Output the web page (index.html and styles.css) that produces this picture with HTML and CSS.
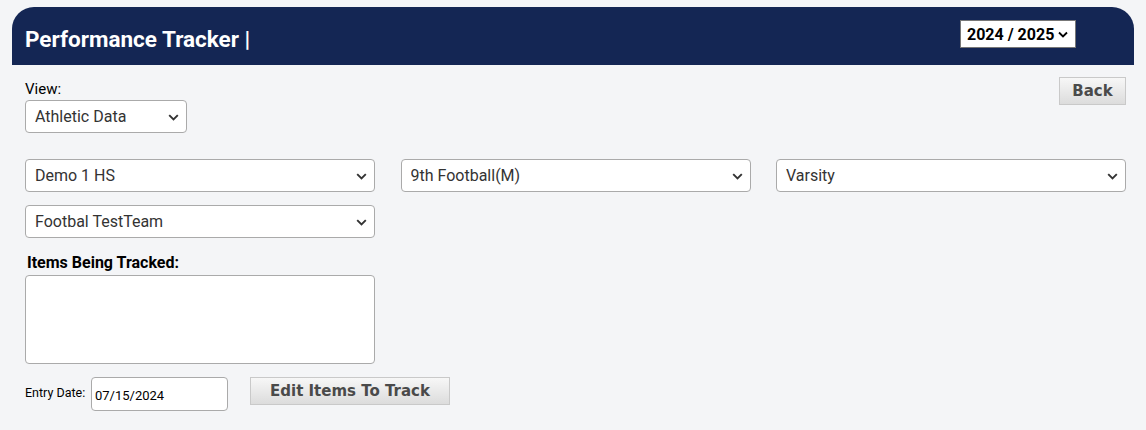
FILE: index.html
```html
<!DOCTYPE html>
<html>
<head>
<meta charset="utf-8">
<link rel="stylesheet" href="styles.css">
</head>
<body>
<header class="topbar">
  <h1 class="title">Performance Tracker |</h1>
  <div class="year-wrap">
    <select class="year-select"><option>2024 / 2025</option></select>
    <svg class="year-chev" width="10" height="7" viewBox="0 0 10 7"><path d="M1 1.5 L5 5.5 L9 1.5" fill="none" stroke="#000" stroke-width="1.8"/></svg>
  </div>
</header>
<main class="content">
  <div class="top-row">
    <div class="view-group">
      <label class="view-label">View:</label>
      <div class="sel sel-view">
        <select><option>Athletic Data</option></select>
        <svg class="chev" width="11" height="7" viewBox="0 0 11 7"><path d="M1.2 1.2 L5.5 5.5 L9.8 1.2" fill="none" stroke="#333" stroke-width="1.9"/></svg>
      </div>
    </div>
    <button class="btn btn-back">Back</button>
  </div>
  <div class="grid">
    <div class="sel">
      <select><option>Demo 1 HS</option></select>
      <svg class="chev" width="11" height="7" viewBox="0 0 11 7"><path d="M1.2 1.2 L5.5 5.5 L9.8 1.2" fill="none" stroke="#333" stroke-width="1.9"/></svg>
    </div>
    <div class="sel">
      <select><option>9th Football(M)</option></select>
      <svg class="chev" width="11" height="7" viewBox="0 0 11 7"><path d="M1.2 1.2 L5.5 5.5 L9.8 1.2" fill="none" stroke="#333" stroke-width="1.9"/></svg>
    </div>
    <div class="sel">
      <select><option>Varsity</option></select>
      <svg class="chev" width="11" height="7" viewBox="0 0 11 7"><path d="M1.2 1.2 L5.5 5.5 L9.8 1.2" fill="none" stroke="#333" stroke-width="1.9"/></svg>
    </div>
    <div class="sel">
      <select><option>Footbal TestTeam</option></select>
      <svg class="chev" width="11" height="7" viewBox="0 0 11 7"><path d="M1.2 1.2 L5.5 5.5 L9.8 1.2" fill="none" stroke="#333" stroke-width="1.9"/></svg>
    </div>
  </div>
  <label class="items-label">Items Being Tracked:</label>
  <textarea class="items-box"></textarea>
  <div class="entry-row">
    <label class="entry-label">Entry Date:</label>
    <input class="date-input" type="text" value="07/15/2024">
    <button class="btn btn-edit">Edit Items To Track</button>
  </div>
</main>
</body>
</html>
```

FILE: styles.css
```css
* { box-sizing: border-box; }
body {
  margin: 0;
  background: #f4f5f7;
  font-family: Roboto, "Liberation Sans", sans-serif;
  color: #000;
}
.topbar {
  margin: 7px 12px 0 12px;
  height: 58px;
  background: #142654;
  border-radius: 22px 22px 0 0;
  display: flex;
  justify-content: space-between;
  align-items: flex-start;
  padding: 0 58px 0 13px;
}
.title {
  margin: 0;
  padding-top: 19px;
  font-size: 22.5px;
  line-height: 27px;
  font-weight: 700;
  color: #fff;
}
.year-wrap {
  position: relative;
  margin-top: 13px;
}
.year-select {
  appearance: none;
  -webkit-appearance: none;
  width: 116px;
  height: 28px;
  border: 1px solid #777;
  border-radius: 0;
  background: #fff;
  font-family: Roboto, "Liberation Sans", sans-serif;
  font-weight: 700;
  font-size: 16px;
  color: #000;
  padding: 0 0 0 6px;
}
.year-chev {
  position: absolute;
  right: 8px;
  top: 11px;
  pointer-events: none;
}
.content {
  padding: 0 20px 0 25px;
}
.top-row {
  display: flex;
  justify-content: space-between;
  align-items: flex-start;
}
.view-group {
  display: flex;
  flex-direction: column;
}
.view-label {
  font-size: 15px;
  line-height: 18px;
  margin-top: 14px;
  height: 21px;
  padding-top: 1px;
}
.sel {
  position: relative;
  width: 350px;
  height: 33px;
}
.sel select {
  appearance: none;
  -webkit-appearance: none;
  width: 100%;
  height: 100%;
  border: 1px solid #aaa;
  border-radius: 4px;
  background: #fff;
  font-family: Roboto, "Liberation Sans", sans-serif;
  font-size: 16px;
  color: #333;
  padding: 0 0 0 9px;
}
.sel-view { width: 162px; }
.chev {
  position: absolute;
  right: 8px;
  top: 14px;
  pointer-events: none;
}
.btn {
  font-family: "DejaVu Sans", Verdana, sans-serif;
  font-weight: 700;
  font-size: 15px;
  color: #4a4a4a;
  border: 1px solid #c9c9c9;
  background: linear-gradient(#f7f7f7, #dcdcdc);
  border-radius: 0;
  padding: 0;
  cursor: pointer;
}
.btn-back {
  width: 67px;
  height: 28px;
  margin-top: 12px;
}
.grid {
  display: grid;
  grid-template-columns: repeat(3, 350px);
  column-gap: 25.5px;
  row-gap: 13px;
  margin-top: 26px;
}
.items-label {
  display: block;
  font-size: 16px;
  font-weight: 700;
  line-height: 19px;
  margin: 15px 0 0 2px;
  height: 22px;
}
.items-box {
  display: block;
  width: 350px;
  height: 89px;
  border: 1px solid #aaa;
  border-radius: 4px;
  background: #fff;
  resize: none;
  margin: 0;
}
.entry-row {
  display: flex;
  align-items: flex-start;
  margin-top: 13px;
}
.entry-label {
  font-size: 12.5px;
  line-height: 14px;
  margin-top: 9px;
  width: 66px;
}
.date-input {
  width: 137px;
  height: 34px;
  border: 1px solid #aaa;
  border-radius: 4px;
  background: #fff;
  font-family: Roboto, "Liberation Sans", sans-serif;
  font-size: 13px;
  color: #000;
  padding: 2px 0 0 3px;
}
.btn-edit {
  width: 200px;
  height: 28px;
  margin-left: 22px;
}
```
